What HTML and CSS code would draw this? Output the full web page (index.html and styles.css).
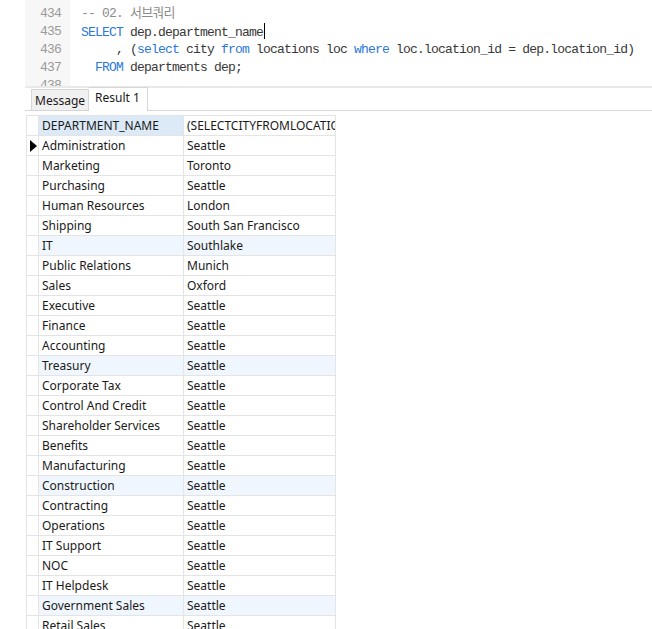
FILE: index.html
```html
<!DOCTYPE html>
<html>
<head>
<meta charset="utf-8">
<link rel="stylesheet" href="styles.css">
</head>
<body>
<div class="main">
  <div class="editor">
    <div class="gutter">
      <div class="ln">434</div>
      <div class="ln">435</div>
      <div class="ln">436</div>
      <div class="ln">437</div>
      <div class="ln">438</div>
    </div>
    <div class="code">
      <div class="line"><span class="cm">-- 02. 서브쿼리</span></div>
      <div class="line"><span class="kw">SELECT</span> dep.department_name<span class="caret"></span></div>
      <div class="line">     , (<span class="kw">select</span> city <span class="kw">from</span> locations loc <span class="kw">where</span> loc.location_id = dep.location_id)</div>
      <div class="line">  <span class="kw">FROM</span> departments dep;</div>
      <div class="line"> </div>
    </div>
  </div>
  <div class="sep"></div>
  <div class="tabs">
    <div class="tab">Message</div>
    <div class="tab active">Result 1</div>
  </div>
  <div class="grid-wrap">
    <table class="grid">
      <colgroup><col class="c0"><col class="c1"><col class="c2"></colgroup>
      <thead>
        <tr><th class="ind"></th><th class="sel">DEPARTMENT_NAME</th><th><div class="clip">(SELECTCITYFROMLOCATIONSLOCWHERE</div></th></tr>
      </thead>
      <tbody>
        <tr><td class="ind"><span class="arrow"></span></td><td>Administration</td><td>Seattle</td></tr>
        <tr><td class="ind"></td><td>Marketing</td><td>Toronto</td></tr>
        <tr><td class="ind"></td><td>Purchasing</td><td>Seattle</td></tr>
        <tr><td class="ind"></td><td>Human Resources</td><td>London</td></tr>
        <tr><td class="ind"></td><td>Shipping</td><td>South San Francisco</td></tr>
        <tr class="alt"><td class="ind"></td><td>IT</td><td>Southlake</td></tr>
        <tr><td class="ind"></td><td>Public Relations</td><td>Munich</td></tr>
        <tr><td class="ind"></td><td>Sales</td><td>Oxford</td></tr>
        <tr><td class="ind"></td><td>Executive</td><td>Seattle</td></tr>
        <tr><td class="ind"></td><td>Finance</td><td>Seattle</td></tr>
        <tr><td class="ind"></td><td>Accounting</td><td>Seattle</td></tr>
        <tr class="alt"><td class="ind"></td><td>Treasury</td><td>Seattle</td></tr>
        <tr><td class="ind"></td><td>Corporate Tax</td><td>Seattle</td></tr>
        <tr><td class="ind"></td><td>Control And Credit</td><td>Seattle</td></tr>
        <tr><td class="ind"></td><td>Shareholder Services</td><td>Seattle</td></tr>
        <tr><td class="ind"></td><td>Benefits</td><td>Seattle</td></tr>
        <tr><td class="ind"></td><td>Manufacturing</td><td>Seattle</td></tr>
        <tr class="alt"><td class="ind"></td><td>Construction</td><td>Seattle</td></tr>
        <tr><td class="ind"></td><td>Contracting</td><td>Seattle</td></tr>
        <tr><td class="ind"></td><td>Operations</td><td>Seattle</td></tr>
        <tr><td class="ind"></td><td>IT Support</td><td>Seattle</td></tr>
        <tr><td class="ind"></td><td>NOC</td><td>Seattle</td></tr>
        <tr><td class="ind"></td><td>IT Helpdesk</td><td>Seattle</td></tr>
        <tr class="alt"><td class="ind"></td><td>Government Sales</td><td>Seattle</td></tr>
        <tr><td class="ind"></td><td>Retail Sales</td><td>Seattle</td></tr>
      </tbody>
    </table>
  </div>
</div>
</body>
</html>
```
FILE: styles.css
```css
html, body {
  margin: 0;
  padding: 0;
  background: #ffffff;
  overflow: hidden;
}
body {
  font-family: "Noto Sans", "Liberation Sans", sans-serif;
  font-size: 12px;
  color: #1a1a1a;
}
.main {
  margin-left: 25px;
  height: 629px;
  overflow: hidden;
}
.editor {
  display: flex;
  height: 86px;
  overflow: hidden;
  background: #ffffff;
}
.gutter {
  width: 45px;
  flex: none;
  background: #f7f7f7;
  padding-top: 5px;
  box-sizing: border-box;
  padding-right: 9px;
  text-align: right;
  font-family: "Liberation Mono", "DejaVu Sans Mono", monospace;
  font-size: 13px;
  letter-spacing: -0.8px;
  color: #9a9a9a;
}
.ln {
  height: 18px;
  line-height: 18px;
}
.code {
  flex: 1;
  padding-top: 5px;
  padding-left: 11px;
  font-family: "Liberation Mono", "DejaVu Sans Mono", "Noto Sans CJK KR", monospace;
  font-size: 13px;
  letter-spacing: -0.8px;
  color: #383838;
}
.line {
  height: 18px;
  line-height: 18px;
  white-space: pre;
}
.kw { color: #2a78d8; }
.cm { color: #8c8c8c; }
.caret {
  display: inline-block;
  width: 1px;
  height: 16px;
  background: #000;
  vertical-align: -3px;
  margin-left: 1px;
}
.sep {
  height: 2px;
  background: #e9e9e9;
}
.tabs {
  display: flex;
  align-items: flex-end;
  height: 22px;
  padding-left: 6px;
  border-bottom: 1px solid #d6d6d6;
}
.tab {
  height: 21px;
  line-height: 21px;
  padding: 0 3px;
  background: #f0f0f0;
  border: 1px solid #d6d6d6;
  border-bottom: none;
  box-sizing: border-box;
  color: #1a1a1a;
}
.tab.active {
  line-height: 19px;
  background: #ffffff;
  border-left: none;
  padding: 0 7px 0 6px;
  margin-bottom: -1px;
  height: 24px;
}
.grid-wrap {
  padding-top: 4px;
  padding-left: 1px;
}
.grid {
  border-collapse: collapse;
  table-layout: fixed;
  width: 310px;
}
.c0 { width: 12px; }
.c1 { width: 145px; }
.c2 { width: 152px; }
.grid th, .grid td {
  height: 20px;
  padding: 0 0 0 3px;
  border: 1px solid #e4e4e4;
  text-align: left;
  font-weight: normal;
  white-space: nowrap;
  overflow: hidden;
  box-sizing: border-box;
}
.grid th {
  color: #1a1a1a;
}
.grid th.sel {
  background: #dce9f6;
}
.clip {
  overflow: hidden;
  white-space: nowrap;
}
.grid td.ind, .grid th.ind {
  padding: 0;
}
.grid tr.alt td {
  background: #eff6fd;
}
.grid tr.alt td.ind {
  background: #ffffff;
}
.arrow {
  display: block;
  width: 0;
  height: 0;
  margin-left: 3px;
  border-top: 6px solid transparent;
  border-bottom: 6px solid transparent;
  border-left: 7px solid #000;
}
```
